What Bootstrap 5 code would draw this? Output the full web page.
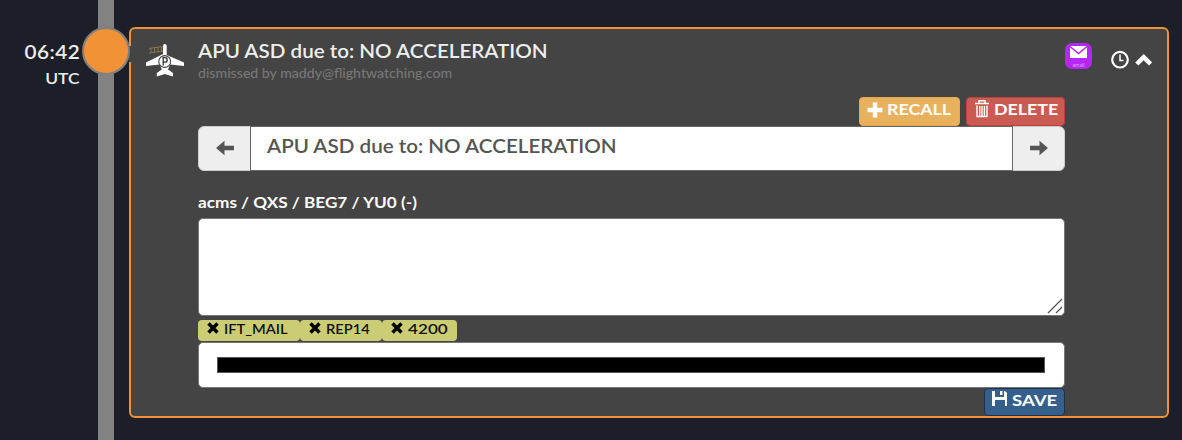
<!DOCTYPE html>
<html lang="en">
<head>
<meta charset="utf-8">
<meta name="viewport" content="width=device-width, initial-scale=1">
<title>Timeline event</title>
<link href="https://cdn.jsdelivr.net/npm/bootstrap@5.3.0/dist/css/bootstrap.min.css" rel="stylesheet">
<style>
body{background:#1d1f28;font-family:Lato,sans-serif;color:#eee;height:440px;overflow:hidden}
svg{display:block;flex:none}
/* widened lettering */
.wide{display:inline-block;white-space:nowrap;transform:scaleX(var(--w,1.113));transform-origin:0 50%}
.when .wide{--w:1.09;transform-origin:100% 50%}
.byline .wide{--w:1.086}
.source .wide{--w:1.157}
.tagpill .wide{--w:1.085}
.tagpill .digits{--w:1.27}
.save .wide{--w:1.16}
.timeline{height:440px}
.when{width:98px;padding:41px 18px 0 0;text-align:right;flex:none;font-weight:600}
.when .hour{font-size:19px;line-height:22px;letter-spacing:.45px;margin-right:-.4px}
.when .zone{font-size:16px;line-height:20px;margin-top:5px}
.rail{width:16px;background:#828282;flex:none}
.dot{left:-16px;top:27px;width:48px;height:48px;border:2px solid #7f7f7f;border-radius:50%;background:#f19236}
.event{margin:27px 13px 0 15px;width:1040px;height:391px;border:2px solid #f19236;border-radius:6px;background:#444}
.event .notch{left:-2px;top:17px;width:2px;height:16px;background:#444}
.lead-icon{left:15px;top:14px}
.tools{right:15px;top:13px}
.content{margin-left:67px;width:867px}
.heading{font-size:18.5px;line-height:22px;padding-top:11px;height:33px;font-weight:600}
.byline{font-size:13px;line-height:18px;height:35px;padding-top:2px;color:#777;font-weight:500}
.act{height:29px;border-radius:4px;border:1px solid;padding:0 7px;font-size:16px;font-weight:700;color:#fff;display:flex;line-height:24px}
.act .wide{margin-top:-1px}
.recall{background:#e8b15e;border-color:#e8a94c;width:101px}
.delete{background:#c95b53;border-color:#bd403a;width:99px}
.save{background:#375f8d;border-color:#1d324d;width:81px;height:28px}
.subject{height:45px}
.subject .input-group-text{width:53px;background:#eee;border:1px solid #ccc;border-radius:6px;justify-content:center;padding:0 0 2px}
.subject .form-control{border:1px solid #666;color:#555;font-size:18.5px;padding:0 16px 4px;font-weight:600}
.source{font-size:15px;line-height:20px;margin-top:21px;height:26px;color:#fff;font-weight:700}
.source .wide{--w:1.145}
.note{height:98px;border:1px solid #777;border-radius:5px;background:#fff;resize:none;display:block}
.grip{right:1px;bottom:1px}
.tags{height:21px;margin-top:4px}
.tagpill{height:21px;background:#cbcc74;border-radius:4px;color:#111;font-size:13.5px;line-height:18px;font-weight:600;padding-left:9px}
.tagpill svg{margin:2px 5px 0 0}
.redacted{height:46px;margin-top:1px;border:1px solid #777;border-radius:5px;background:#fff;padding:14px 19px 13px 18px}
.redacted div{height:16px;background:#000;border:1px solid #555}
</style>
<script src="https://cdn.jsdelivr.net/npm/bootstrap@5.3.0/dist/js/bootstrap.bundle.min.js"></script>
</head>
<body>
<main class="timeline d-flex">
  <div class="when"><div class="hour"><span class="wide">06:42</span></div><div class="zone"><span class="wide">UTC</span></div></div>
  <div class="rail position-relative"><div class="dot position-absolute z-1"></div></div>
  <section class="event position-relative">
    <div class="notch position-absolute"></div>
    <svg class="lead-icon position-absolute" width="40" height="36" viewBox="0 0 40 36">
      <g fill="none" stroke="#8c7448" stroke-width="1"><path d="M3 5.500 17 3.500M3 10 17 8M5 5v5M8.500 4.500v5M12 4v5M15.500 4v5"/></g>
      <path fill="#fff" d="M17 3q0-2 1.800-2T20.700 3v9L38 19.500V23l-14-1.500-2 5 5 3.500V33.500l-8.200-2.500-8 2.500v-3.500l5-3.500-2-5L0 23V19.500L17 11Z"/>
      <circle cx="18.700" cy="18.500" r="5.900" fill="#fff" stroke="#444" stroke-width="1.100"/>
      <path d="M17.200 22.500v-7.800h1.800a2 2 0 0 1 0 4.400h-1.500" fill="none" stroke="#333" stroke-width="1.300"/>
    </svg>
    <div class="tools position-absolute d-flex">
      <svg width="27" height="28" viewBox="0 0 27 28"><rect y="1" width="27" height="26" rx="7" fill="#b527f6"/><path d="M5 4h17v12H5Z" fill="#fff"/><path d="m5 4.500 8.500 7 8.500-7" fill="none" stroke="#b527f6" stroke-width="1.500"/><text x="13.500" y="25" text-anchor="middle" font-family="Lato,sans-serif" font-size="5" fill="#e3a8ff">email</text></svg>
      <svg class="ms-3" width="44" height="30" viewBox="0 0 44 30"><circle cx="12" cy="17.700" r="7.800" fill="none" stroke="#fff" stroke-width="2.200"/><path d="M12 12.500v6h3.500" fill="none" stroke="#fff" stroke-width="1.500"/><path d="m28.800 22 6.900-6.800 6.900 6.800" fill="none" stroke="#fff" stroke-width="4.500"/></svg>
    </div>
    <div class="content">
      <div class="heading"><span class="wide">APU ASD due to: NO ACCELERATION</span></div>
      <div class="byline"><span class="wide">dismissed by maddy@flightwatching.com</span></div>
      <div class="d-flex justify-content-end" style="gap:6px">
        <button class="act recall"><svg class="me-1" width="16" height="24" viewBox="0 0 16 24"><path d="M8 4.500v15M.5 12h15" stroke="#fff" stroke-width="4.500"/></svg><span class="wide">RECALL</span></button>
        <button class="act delete"><svg class="me-1" width="16" height="24" viewBox="0 0 16 24"><path d="M1 5.500h14M5 5V2.800h6V5M3 7.500v11h10v-11M5.700 8v10M8 8v10M10.400 8v10" fill="none" stroke="#fff" stroke-width="1.400"/></svg><span class="wide">DELETE</span></button>
      </div>
      <div class="subject input-group flex-nowrap">
        <span class="input-group-text"><svg width="20" height="16" viewBox="0 0 20 16"><path fill="#555" d="M1 8 9.500.7V5.800H19v4.400H9.500v5.100Z"/></svg></span>
        <div class="form-control d-flex align-items-center"><span class="wide">APU ASD due to: NO ACCELERATION</span></div>
        <span class="input-group-text"><svg width="20" height="16" viewBox="0 0 20 16"><path fill="#555" d="M19 8 10.500.7V5.800H1v4.400h9.500v5.100Z"/></svg></span>
      </div>
      <div class="source"><span class="wide">acms / QXS / BEG7 / YU0 (-)</span></div>
      <div class="position-relative">
        <textarea class="note w-100"></textarea>
        <svg class="grip position-absolute" width="17" height="17" viewBox="0 0 17 17"><path d="M1 15 15 1M9 15l6-6" stroke="#555" stroke-width="1.300"/></svg>
      </div>
      <div class="tags d-flex">
        <div class="tagpill d-flex" style="width:102px"><svg width="12" height="12" viewBox="0 0 12 12"><path d="m1.500 1.500 9 9m0-9-9 9" stroke="#000" stroke-width="3.500"/></svg><span class="wide">IFT_MAIL</span></div>
        <div class="tagpill d-flex" style="width:82px"><svg width="12" height="12" viewBox="0 0 12 12"><path d="m1.500 1.500 9 9m0-9-9 9" stroke="#000" stroke-width="3.500"/></svg><span class="wide">REP14</span></div>
        <div class="tagpill d-flex" style="width:75px"><svg width="12" height="12" viewBox="0 0 12 12"><path d="m1.500 1.500 9 9m0-9-9 9" stroke="#000" stroke-width="3.500"/></svg><span class="wide digits">4200</span></div>
      </div>
      <div class="redacted"><div></div></div>
      <div class="d-flex justify-content-end"><button class="act save"><svg class="me-1" width="16" height="24" viewBox="0 0 16 24"><path fill="#fff" d="M0 2h3v6h9V2h1l2 2v13h-2v-6H3v6H0ZM8 2h2.500v4H8Z"/></svg><span class="wide">SAVE</span></button></div>
    </div>
  </section>
</main>
</body>
</html>
